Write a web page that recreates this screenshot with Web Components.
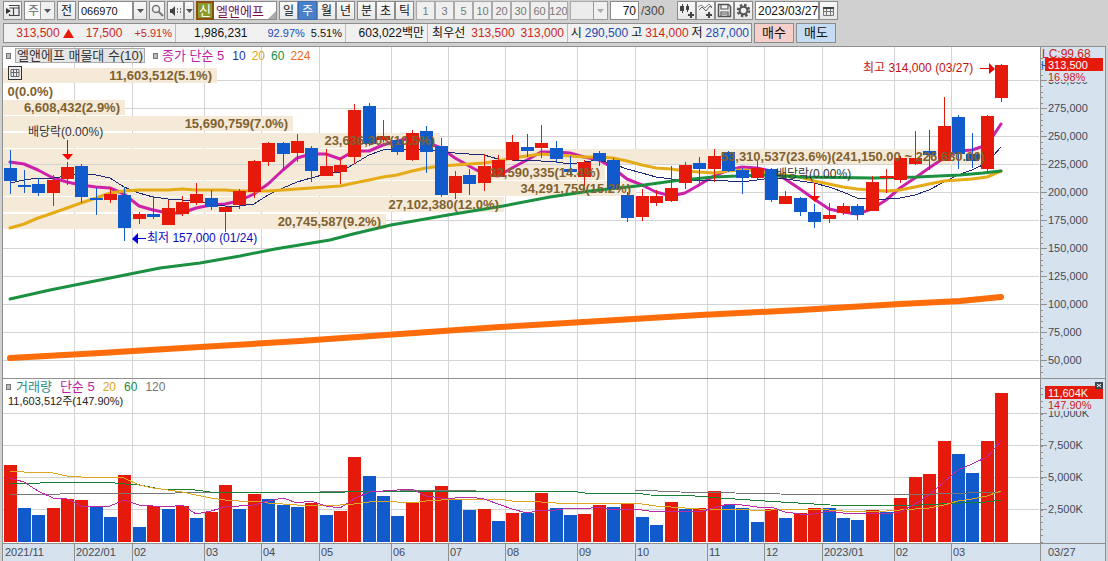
<!DOCTYPE html>
<html lang="ko">
<head>
<meta charset="utf-8">
<title>엘앤에프 주봉 차트</title>
<style>
  html, body { margin: 0; height: 100%; }
  body { background: #d0d0d0; color: #111; font: 12px/16px "Liberation Sans", "Noto Sans CJK KR", sans-serif; overflow: hidden; }
</style>
</head>
<body>
<hts-window></hts-window>

<script>
const BASE = `
  *, *::before, *::after { box-sizing: border-box; }
  button, input, select { font: inherit; color: inherit; margin: 0; padding: 0; border-radius: 0; outline: none; }
  button { cursor: pointer; }
  svg { display: block; }
`;
const RED = '#e61a0a', BLUE = '#115acb', LINE = '#909090', AXIS = '#d7e2ef';

function define(name, html, setup) {
  customElements.define(name, class extends HTMLElement {
    connectedCallback() {
      if (this.shadowRoot) return;
      const t = document.createElement('template');
      t.innerHTML = `<style>${BASE}</style>${html}`;
      this.attachShadow({ mode: 'open' }).append(t.content.cloneNode(true));
      if (setup) setup.call(this, this.shadowRoot);
    }
  });
}

/* A square toolbar button; "label" names icon-only buttons. */
define('tool-button', `
  <style>
    :host { display: flex; flex: none; width: 19px; height: 19px; }
    button { flex: 1; min-width: 0; display: flex; align-items: center; justify-content: center; white-space: nowrap; overflow: hidden;
      border: 1px solid #8c8c8c; background: linear-gradient(#f8f8f8, #e8e8e8); line-height: 16px; }
    :host([tone="muted"]) button { color: #777; background: #efefef; border-color: #aaa; font-size: 11px; }
    :host([tone="active"]) button { color: #fff; background: #4a80c8; border-color: #3c6cb0; }
    :host([tone="buy"]) button { background: #f6cfcb; }
    :host([tone="sell"]) button { background: #c5dcf2; }
    :host([narrow]) { width: 14px; }
    :host([slim]) { width: 10px; }
    :host([wide]) { width: 40px; height: 20px; }
    :host([wide]) button { font-size: 13px; }
  </style>
  <button type="button"><slot></slot></button>`,
  function (root) {
    const b = root.querySelector('button');
    if (this.getAttribute('label')) b.setAttribute('aria-label', this.getAttribute('label'));
    if (this.getAttribute('tone') === 'active') b.setAttribute('aria-pressed', 'true');
  });

/* Drop-down with its own arrow box. */
define('tool-select', `
  <style>
    :host { display: grid; flex: none; width: 31px; height: 19px; }
    :host([wide]) { width: 38px; }
    select, span { grid-area: 1 / 1; }
    select { appearance: none; width: 100%; height: 19px; border: 1px solid #8c8c8c; background: #fafafa; padding-left: 3px; font-size: 12px; color: #666; }
    select:disabled { background: #ececec; opacity: 1; border-color: #aaa; }
    span { justify-self: end; width: 15px; border: 1px solid #9a9a9a; background: #f0f0f0; display: grid; place-items: center; pointer-events: none; color: #555; }
    :host([wide]) span { color: #aaa; }
  </style>
  <select></select>
  <span><svg width="7" height="4"><path d="M0 0h7L3.5 4z" fill="currentColor"/></svg></span>`,
  function (root) {
    const s = root.querySelector('select');
    s.setAttribute('aria-label', this.getAttribute('label'));
    const v = this.getAttribute('value');
    if (v) s.add(new Option(v, v)); else s.disabled = true;
  });

const DOWN = '<svg width="7" height="4"><path d="M0 0h7L3.5 4z" fill="#555"/></svg>';

define('hts-toolbar', `
  <style>
    :host { display: flex; gap: 2px; height: 19px; align-items: center; white-space: nowrap; }
    .group { display: flex; flex: none; }
    input { height: 19px; border: 1px solid #8c8c8c; background: #fff; }
    .code { width: 55px; padding-left: 2px; font-size: 11px; }
    .name { display: grid; width: 81px; height: 19px; flex: none; }
    .name > * { grid-area: 1 / 1; }
    .name input { width: 81px; padding-left: 19px; font-size: 13px; color: #7a0a50; }
    .name b { width: 18px; border: 2px solid #8a5010; background: #8c9a2c; color: #fff; font-weight: 400; font-size: 13px; line-height: 15px; text-align: center; z-index: 1; }
    .name svg { place-self: end; margin: 1px; }
    .count { width: 29px; text-align: right; padding-right: 2px; }
    .total { width: 34px; color: #444; }
    .date { width: 64px; padding-left: 2px; }
    .search { width: 16px; }
    .voice { width: 17px; }
  </style>
  <tool-button label="화면 이동"><svg width="14" height="13"><path d="M3.5 2v-.5h9.500v10H3.5V10M3.500 4h9M7.500 4v7" fill="none" stroke="#444" stroke-width="1.200"/><path d="M0 4l5 3-5 3z" fill="#333"/></svg></tool-button>
  <tool-select label="종목 구분" value="주"></tool-select>
  <tool-button>전</tool-button>
  <div class="group"><input class="code" value="066970" aria-label="종목코드"><tool-button narrow label="최근 종목">${DOWN}</tool-button></div>
  <tool-button class="search" label="종목 검색"><svg width="13" height="13"><circle cx="5" cy="5" r="3.5" fill="none" stroke="#777" stroke-width="1.5"/><path d="M7.5 7.5l4.500 4.500" stroke="#777" stroke-width="2"/></svg></tool-button>
  <div class="group"><tool-button class="voice" label="음성"><svg width="13" height="12"><path d="M1 4h2l3-3v10L3 8H1z" fill="#444"/><path d="M8 3h1v2H8zM11 3h1v2h-1zM8 6h1v2H8zM11 6h1v2h-1z" fill="#777"/></svg></tool-button><tool-button slim label="음성 설정">${DOWN}</tool-button></div>
  <div class="name"><input value="엘앤에프" aria-label="종목명"><b>신</b><svg width="8" height="8"><path d="M8 0v8H0z" fill="#aaa"/></svg></div>
  <div class="group" id="period"></div>
  <div class="group" id="intraday"></div>
  <div class="group" id="minutes"></div>
  <tool-select wide label="주기"></tool-select>
  <input class="count" value="70" aria-label="표시 봉 수">
  <span class="total">/300</span>
  <div class="group">
    <tool-button label="봉 추가"><svg width="15" height="15"><path d="M3.500 1v9M8.500 1v8" stroke="#444"/><path d="M1 3h4v5H1zM7 3h3v4H7z" fill="#444"/><path d="M12 9v6M9 12h6" stroke="#444" stroke-width="2"/></svg></tool-button>
    <tool-button label="지표 추가"><svg width="15" height="15"><path d="M0 4l3-2 4 3 4-4 3 3" fill="none" stroke="#888"/><path d="M1 7l3-3 4 4 4-5 2 2" fill="none" stroke="#666"/><path d="M11 9v6M8 12h6" stroke="#444" stroke-width="2"/></svg></tool-button>
    <tool-button label="저장"><svg width="15" height="15"><path d="M1.5 1.5h10l2 2v10h-12z" fill="none" stroke="#555" stroke-width="1.5"/><path d="M4 2v4h7V2M4 13V9h7v4M5 11h5" fill="none" stroke="#555" stroke-width="1.2"/></svg></tool-button>
    <tool-button label="설정"><svg width="15" height="15"><circle cx="7.5" cy="7.5" r="5.500" fill="none" stroke="#555" stroke-width="2.500" stroke-dasharray="2.400 1.920"/><circle cx="7.5" cy="7.5" r="3.800" fill="none" stroke="#555" stroke-width="2"/></svg></tool-button>
  </div>
  <div class="group"><input class="date" value="2023/03/27" aria-label="기준일"><tool-button label="달력"><svg width="13" height="12"><path d="M1.5 2.5h10v8h-10zM1.500 6.500h10M4.500 4v6M8.500 4v6" fill="none" stroke="#777"/><path d="M1 2h11v2H1z" fill="#444"/></svg></tool-button></div>`,
  function (root) {
    const fill = (id, items, tone) => items.forEach(t => {
      const b = document.createElement('tool-button');
      const state = t === '주' ? 'active' : tone;
      if (state) b.setAttribute('tone', state);
      b.textContent = t;
      root.getElementById(id).append(b);
    });
    fill('period', ['일', '주', '월', '년']);
    fill('intraday', ['분', '초', '틱']);
    fill('minutes', ['1', '3', '5', '10', '20', '30', '60', '120'], 'muted');
  });

define('hts-quote', `
  <style>
    :host { display: flex; gap: 2px; height: 20px; white-space: nowrap; }
    .strip { display: flex; flex: none; width: 749px; border: 1px solid #8c8c8c; background: #f0f0f0; }
    .strip > div { display: flex; flex: none; align-items: center; justify-content: flex-end; gap: 6px; padding-right: 3px; border-right: 1px solid #bbb; }
    .strip > div:last-child { border: 0; flex: 1; gap: 3px; padding-right: 2px; }
    .a { width: 172px; } .b { width: 170px; } .c { width: 82px; } .d { width: 140px; }
    .strip > .a { gap: 12px; }
    .up { display: flex; align-items: center; gap: 3px; }
    .r { color: #c8281e; } .u { color: #1c48b4; }
    small { font-size: 11px; }
    .b span { margin-right: 14px; }
  </style>
  <div class="strip">
    <div class="a r"><span class="up">313,500<svg width="11" height="9"><path d="M0 9h11L5.5 0z" fill="#e61a0a"/></svg></span><span>17,500</span><small>+5.91%</small></div>
    <div class="b"><span>1,986,231</span><small class="u">92.97%</small><small>5.51%</small></div>
    <div class="c">603,022백만</div>
    <div class="d"><span>최우선</span><span class="r">313,500</span><span class="r">313,000</span></div>
    <div><span>시</span><span class="u">290,500</span><span>고</span><span class="r">314,000</span><span>저</span><span class="u">287,000</span></div>
  </div>
  <tool-button wide tone="buy">매수</tool-button>
  <tool-button wide tone="sell">매도</tool-button>`);

/* Chart data. Levels are in the drawing's own units (see Pane.X / Pane.Y). */
/* Each candle: colour, high, body top, body bottom, low. */
const CANDLES = `b150 168 181 194,b170 185 187 193,b178 184 193 196,r175 180 193 206,r162 167 179 185,b164 166 197 203,b188 198 200 215,r188 194 200 203,b187 195 228 241,r212 214 219 224,
b196 214 217 219,r200 208 225 225,r196 202 214 216,r183 194 203 205,b190 198 207 210,r206 207 212 232,r189 191 205 209,r160 161 192 198,r142 143 162 166,b142 143 154 170,
r134 141 153 162,b146 148 171 182,r149 166 176 176,r158 165 172 184,r104 110 157 164,b103 106 144 146,r120 136 140 142,b136 140 152 155,r130 133 160 161,b126 131 152 173,
b138 146 195 197,r171 176 193 199,b169 175 184 195,r154 166 183 191,r155 160 177 177,r135 142 160 161,b134 147 151 157,r125 143 148 158,b141 148 159 163,b156 169 172 175,
r160 162 177 186,b151 153 161 166,b158 160 189 190,b192 195 218 222,r189 196 217 221,r190 196 203 206,r166 188 201 202,r162 165 183 189,b157 163 169 183,r149 156 169 182,
b151 152 171 172,b168 170 178 194,r161 168 178 179,b168 169 200 202,r191 196 204 204,b197 198 212 216,b204 212 222 228,r203 215 219 223,r203 206 213 215,b204 206 215 220,
r176 182 211 211,r169 176 178 193,r156 158 180 183,r131 158 164 165,b130 151 155 170,r97 126 161 161,b115 117 154 169,b133 154 161 168,r115 116 169 172,r64 65 98 102`
  .split(',').map(s => { s = s.trim(); return [s[0], ...s.slice(1).split(' ').map(Number)]; });
const VOLUMES = 'r465 b508 b515 r508 r499 r500 b506 b517 r475 b527 r506 b509 r506 b518 r512 r485 b509 r494 b499 b505 b507 r503 b515 r511 r457 b476 b496 b516 r502 r490 r486 b499 b510 r509 b521 r513 b513 r493 b508 b515 r514 r505 b507 r504 b517 b525 r502 b509 r508 r491 b505 b508 b522 r509 b518 r513 r508 b508 b518 b520 r510 b512 r498 r477 r474 r441 b454 b473 r441 r393'.split(' ');
const nums = s => s.split(' ').map(Number);
const MA5 = nums('162 164 170 178 182 185 187 188 194 206 210 213 213 208 205 204 201 194 184 170 158 154 154 159 151 151 145 141 138 142 148 158 166 174 176 168 160 152 152 153 157 160 168 179 185 192 196 193 185 176 170 167 168 171 179 189 199 209 212 214 209 200 188 178 168 158 151 150 145 124');
const MA10 = nums('183 180 178 178 176 174 175 178 187 193 197 199 200 201 204 206 206 204 195 188 182 178 174 172 164 155 150 149 149 150 151 153 154 155 159 160 160 161 162 164 162 160 164 169 173 177 179 180 180 180 181 182 180 178 179 181 183 187 192 198 199 199 198 195 190 182 175 170 163 147');
const MA20 = nums('228 224 218 213 208 203 198 193 191 190 190 190 189 190 190 190 191 191 191 190 189 188 187 186 183 180 177 175 171 168 166 165 164 163 161 158 156 154 155 156 157 157 158 161 165 168 169 171 172 173 171 170 171 173 175 177 181 184 187 189 190 191 190 187 184 181 180 179 177 171');
const V5 = nums('478 482 491 498 499 506 506 506 500 505 506 507 505 514 511 507 506 505 501 498 503 501 506 508 499 492 491 490 489 496 498 498 497 499 504 509 513 510 510 508 509 507 510 509 510 512 511 511 512 508 504 505 507 507 512 514 514 511 513 514 513 514 512 504 495 482 470 464 457 441');
const V20 = nums('471 472 472 473 476 477 477 477 478 485 488 490 492 495 498 500 501 501 503 504 505 505 505 505 504 502 501 502 503 501 500 499 499 499 499 501 501 502 503 503 503 503 503 503 504 506 507 508 509 509 509 509 511 510 509 509 509 510 511 511 511 511 510 509 508 505 501 499 496 491');
const pairs = s => s.split(' ').map(p => p.split(',').map(Number));
const MA60 = pairs('10,299 50,290 90,282 120,276 160,268 200,263 240,256 275,249 330,240 353,234 391,225 448,215 503,206 550,197 590,191 637,186 673,181 713,177 763,175 800,177 873,178 917,177 960,175 983,173 1001,171');
const MA224 = pairs('10,358 100,353 200,347 300,341 400,334 500,327 600,321 700,315 800,310 900,304 960,301 1001,297');
const V60 = pairs('10,483 40,483 54,482 104,482 125,484 140,485 160,489 195,490 210,492 345,492 360,491 570,491 585,493 635,493 650,495 695,496 720,498 765,501 830,505 900,506 940,504 985,502 1001,500');
const V120 = pairs('10,494 60,494 75,493 175,493 190,492 320,492 400,491 477,490 635,490 680,492 735,493 780,494 840,495 870,494 935,494 1001,492');
/* Volume-by-price bands: top, right edge, label. */
const BANDS = [[68, 217, '11,603,512(5.1%)'], [84, 58, '0(0.0%)'], [100, 125, '6,608,432(2.9%)'], [116, 293, '15,690,759(7.0%)'], [133, 440, '23,636,303(10.5%)'],
  [149, 985, '53,310,537(23.6%)(241,150.00 ~ 226,680.00)'], [165, 605, '32,590,335(14.4%)'], [181, 636, '34,291,759(15.2%)'], [197, 504, '27,102,380(12.0%)'], [214, 386, '20,745,587(9.2%)']];
const MONTHS = [[3, '2021/11'], [74, '2022/01'], [132, '02'], [204, '03'], [261, '04'], [319, '05'], [391, '06'], [448, '07'], [505, '08'], [577, '09'], [635, '10'], [707, '11'], [764, '12'], [822, '2023/01'], [894, '02'], [951, '03']];
const AXIS_W = 65;

/* Base class of the panes: redraws its SVG whenever its box changes. */
class Pane extends HTMLElement {
  connectedCallback() {
    if (this.shadowRoot) return;
    this.attachShadow({ mode: 'open' }).innerHTML = `<style>${BASE}
      :host { display: grid; min-height: 0; overflow: hidden; }
      .plot, .legend { grid-area: 1 / 1; }
      .plot { width: 100%; height: 100%; min-height: 0; overflow: hidden; font-size: 12px; }
      .ax { font-size: 11px; fill: #444a55; }
      .big { font-size: 13px; font-weight: 700; fill: #806230; }
      .legend { position: relative; align-self: start; justify-self: start; white-space: nowrap; }
      .row { display: flex; align-items: center; font-size: 13px; line-height: 16px; gap: 8px; }
      i { width: 5px; height: 6px; border: 1px solid #777; background: #bbb; }
      ${this.css || ''}</style><svg class="plot"></svg>${this.legend ? `<div class="legend">${this.legend}</div>` : ''}`;
    this.svg = this.shadowRoot.querySelector('.plot');
    this.render();
    new ResizeObserver(() => this.render()).observe(this);
  }
  X(x) { return Math.round((x - 3) * (this.w - AXIS_W) / 1037); }
  Y(y) { return Math.round((y - this.top) * this.h / this.span); }
  slot(i) { return Math.floor(4 + 14.37 * i); }
  render() {
    this.w = this.clientWidth; this.h = this.clientHeight;
    this.svg.innerHTML = this.draw();
  }
  rect(x0, y0, x1, y1, fill) {
    const x = this.X(x0), y = this.Y(y0);
    return `<rect x="${x}" y="${y}" width="${Math.max(1, this.X(x1) - x)}" height="${Math.max(1, this.Y(y1) - y)}" fill="${fill}" shape-rendering="crispEdges"/>`;
  }
  line(points, color, width) {
    const p = points.map((v, i) => Array.isArray(v) ? v : [this.slot(i) + 6, v]);
    return `<polyline points="${p.map(([x, y]) => `${this.X(x)},${this.Y(y)}`).join(' ')}" fill="none" stroke="${color}" stroke-width="${width}" stroke-linejoin="round" stroke-linecap="round" ${width < 2 ? 'shape-rendering="crispEdges"' : ''}/>`;
  }
  text(x, y, s, attrs = '') { return `<text x="${this.X(x)}" y="${this.Y(y)}" ${attrs}>${s}</text>`; }
  grid(levels) {
    const right = this.w - AXIS_W;
    return MONTHS.slice(1).map(([x]) => `<rect x="${this.X(x)}" width="1" height="${this.h}" fill="#d4d4d4"/>`).join('') +
      levels.map(y => `<rect y="${this.Y(y)}" width="${right - 1}" height="1" fill="#d4d4d4"/>`).join('');
  }
  axis(labels, minor) {
    const a = this.w - AXIS_W;
    let s = `<rect x="${a}" width="${AXIS_W}" height="${this.h}" fill="${AXIS}"/><rect x="${a}" width="1" height="${this.h}" fill="${LINE}"/>`;
    minor.forEach(y => s += `<rect x="${a + 1}" y="${this.Y(y)}" width="2" height="1" fill="${LINE}"/>`);
    labels.forEach(([y, t]) => s += `<rect x="${a + 1}" y="${this.Y(y)}" width="6" height="1" fill="${LINE}"/><text class="ax" x="${a + 8}" y="${this.Y(y) + 4}">${t}</text>`);
    return s;
  }
}

customElements.define('price-pane', class extends Pane {
  top = 47; span = 331;
  css = `.legend { padding: 0 0 0 3px; }
    .row { gap: 4px; height: 17px; }
    .title { height: 15px; line-height: 13px; border: 1px solid #aaa; background: #e6e6e6; padding: 0 1px; color: #333; margin-right: 4px; }
    .nums { font-size: 12px; display: flex; gap: 6px; margin-left: 4px; }
    button { display: block; margin: 2px 0 0 2px; width: 14px; height: 14px; border: 1px solid #333; background: #eee; }`;
  legend = `<div class="row"><i></i><span class="title">엘앤에프 매물대 수(10)</span><i></i><span style="color:#c01ca8">종가 단순 5</span>
    <div class="nums"><span style="color:#1c2f9c">10</span><span style="color:#dba520">20</span><span style="color:#178c3c">60</span><span style="color:#ef6c10">224</span></div></div>
    <button type="button" aria-label="표 보기"><svg width="12" height="12"><path d="M2 2.5h8v7H2zM2 5.5h8M4.500 2v8M7.500 2v8" fill="none" stroke="#666"/></svg></button>`;
  draw() {
    const levels = [], minor = [], labels = [];
    for (let v = 0; v < 11; v++) { levels.push(80 + 28 * v); labels.push([80 + 28 * v, (300 - 25 * v) + ',000']); }
    for (let y = 58; y < 375; y += 5.6) minor.push(y);
    let s = this.grid(levels);
    BANDS.forEach(([y, x]) => { if (y !== 84) s += this.rect(3, y, x, y + 15, '#f5e9d8'); });
    s += this.line(MA5, '#cc22aa', 3) + this.line(MA10, '#1e2878', 1) + this.line(MA20, '#e6ac18', 3) + this.line(MA60, '#1a9040', 3);
    s += this.line(MA224, '#ff6c0a', 6);
    CANDLES.forEach(([c, hi, t, b, lo], i) => {
      const x = this.slot(i), f = c === 'r' ? RED : BLUE;
      s += this.rect(x + 6, hi, x + 7, lo, f) + this.rect(x, t, x + 13, b, f);
    });
    BANDS.forEach(([y, x, t]) => s += this.text(x === 985 ? x : x - 5, y + 12, t, 'class="big" text-anchor="end"'));
    const tri = (pts, f) => `<polygon points="${pts.map(([x, y]) => `${this.X(x)},${this.Y(y)}`).join(' ')}" fill="${f}"/>`;
    s += this.text(28, 136, '배당락(0.00%)', 'fill="#333"') + this.rect(67, 140, 68, 154, '#e00000') + tri([[62, 154], [73, 154], [67.5, 160]], '#f00');
    s += this.text(776, 178, '배당락(0.00%)', 'fill="#333"') + this.rect(814, 183, 815, 196, '#e00000') + tri([[809, 196], [820, 196], [814.5, 202]], '#f00');
    s += this.text(147, 242, '최저 157,000 (01/24)', 'fill="#0a0ac0"') + this.rect(137, 238, 146, 239, '#00d') + tri([[132, 238.5], [138, 233], [138, 244]], '#00d');
    s += this.text(863, 72, '최고 314,000 (03/27)', 'fill="#c01414"') + this.rect(980, 68, 990, 69, '#e00000') + tri([[995, 68.5], [989, 63], [989, 74]], '#e00');
    const a = this.w - AXIS_W;
    s += this.axis(labels, minor);
    s += `<rect x="${a + 8}" y="23" width="50" height="12" fill="${AXIS}"/>
      <text class="ax" x="${a + 1}" y="22" style="fill:${BLUE}">H</text>
      <text x="${a + 2}" y="11" font-size="12" fill="#cc1c1c">LC:99.68</text>
      <rect x="${a + 5}" y="11" width="58" height="13" fill="${RED}"/>
      <text x="${a + 8}" y="22" font-size="11" fill="#fff">313,500</text>
      <text x="${a + 8}" y="34" font-size="11" fill="#cc1c1c">16.98%</text>`;
    return s;
  }
});

customElements.define('volume-pane', class extends Pane {
  top = 379; span = 164;
  css = `.legend { padding: 0 0 0 3px; }
    .row { height: 16px; } .row i { margin-right: -3px; }
    .sum { font-size: 11px; line-height: 12px; padding-left: 2px; color: #222; }
    .n { font-size: 12px; }`;
  legend = `<div class="row"><i></i><span style="color:#2a8c8c">거래량</span><span style="color:#c01ca8">단순 5</span><span class="n" style="color:#dba520">20</span><span class="n" style="color:#178c3c">60</span><span class="n" style="color:#777">120</span></div>
    <div class="sum">11,603,512주(147.90%)</div>`;
  draw() {
    const levels = [413, 445, 477, 509], minor = [];
    for (let y = 388; y < 542; y += 6.4) minor.push(y);
    let s = this.grid(levels);
    VOLUMES.forEach((v, i) => { const x = this.slot(i); s += this.rect(x, +v.slice(1), x + 13, 542, v[0] === 'r' ? RED : BLUE); });
    s += this.line(V120, '#777', 1) + this.line(V60, '#1a8038', 1) + this.line(V20, '#dca824', 1) + this.line(V5, '#bc2aa6', 1);
    const a = this.w - AXIS_W;
    s += this.axis([[413, '10,000K'], [445, '7,500K'], [477, '5,000K'], [509, '2,500K']], minor);
    s += `<rect x="${a + 8}" y="20" width="50" height="12" fill="${AXIS}"/>
      <rect x="${a + 5}" y="7" width="58" height="13" fill="${RED}"/>
      <text x="${a + 8}" y="18" font-size="11" fill="#fff">11,604K</text>
      <text x="${a + 8}" y="30" font-size="11" fill="#cc1c1c">147.90%</text>
      <rect x="${a + 55}" y="3" width="8" height="7" fill="#3c4450"/><path d="M${a + 57} 5l4 3m0-3l-4 3" stroke="#fff"/>`;
    return s;
  }
});

customElements.define('date-axis', class extends Pane {
  top = 544; span = 17;
  css = `:host { background: ${AXIS}; height: 17px; }`;
  draw() {
    const a = this.w - AXIS_W;
    return MONTHS.map(([x, t], i) => (i ? `<rect x="${this.X(x)}" width="1" height="17" fill="${LINE}"/>` : '') + `<text class="ax" x="${this.X(x) + 2}" y="12">${t}</text>`).join('') +
      `<rect x="${a}" width="1" height="17" fill="${LINE}"/><text class="ax" x="${a + 8}" y="12">03/27</text>`;
  }
});

define('hts-window', `
  <style>
    :host { display: flex; flex-direction: column; height: 100vh; min-height: 400px; }
    hts-toolbar { margin: 1px 3px 3px; flex: none; }
    hts-quote { margin: 0 3px 3px; flex: none; }
    main { flex: 1; min-height: 0; display: grid; grid-template-rows: minmax(0, 331fr) minmax(0, 164fr) 17px; row-gap: 1px; margin: 0 2px; background: ${LINE}; border: 1px solid ${LINE}; border-bottom: 0; }
    price-pane, volume-pane { background: #fff; }
  </style>
  <hts-toolbar></hts-toolbar>
  <hts-quote></hts-quote>
  <main><price-pane></price-pane><volume-pane></volume-pane><date-axis></date-axis></main>`);
</script>
</body>
</html>
